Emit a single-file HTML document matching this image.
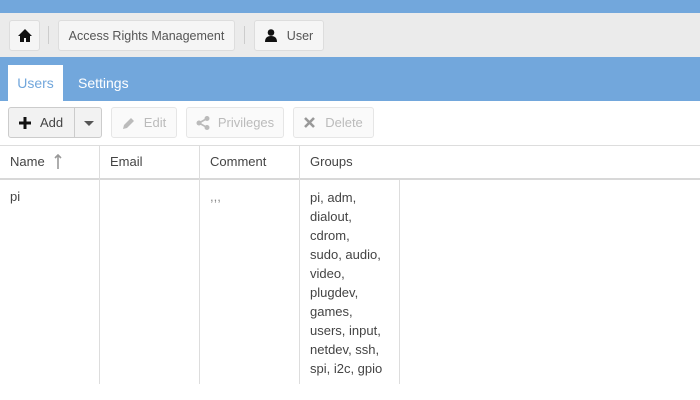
<!DOCTYPE html><html><head><style>
body{margin:0;width:700px;height:400px;overflow:hidden;font-family:"Liberation Sans",sans-serif;font-size:13px;color:#444;background:#fff;position:relative}
.a{position:absolute;box-sizing:border-box}
.btn{border:1px solid #ddd;border-radius:3px;background:#f5f5f5;display:flex;align-items:center;justify-content:center;height:31px}
.dis{color:#bbb;border-color:#e6e6e6;background:#fafafa}
.vl{position:absolute;width:1px;background:#ddd}
</style></head><body>
<div class="a" style="left:0;top:0;width:700px;height:13px;background:#72a7dc"></div>
<div class="a" style="left:0;top:13px;width:700px;height:44px;background:#ebebeb"></div>
<div class="a btn" style="left:9px;top:20px;width:31px;height:31px"><svg width="14" height="13" viewBox="0 0 14 13"><path d="M7 0L0 7h2v6h4V9h2v4h4V7h2z" fill="#111"/></svg></div>
<div class="a" style="left:48px;top:26px;width:1px;height:18px;background:#ccc"></div>
<div class="a btn" style="left:58px;top:20px;width:177px;color:#555;font-size:12.5px">Access Rights Management</div>
<div class="a" style="left:244px;top:26px;width:1px;height:18px;background:#ccc"></div>
<div class="a btn" style="left:254px;top:20px;width:70px;color:#555;font-size:12.5px"><svg width="12" height="13" viewBox="0 0 12 13" style="margin-right:10px"><circle cx="6" cy="3.5" r="3.3" fill="#111"/><path d="M0 13c0-4 2-6 6-6s6 2 6 6z" fill="#111"/></svg>User</div>
<div class="a" style="left:0;top:57px;width:700px;height:44px;background:#72a7dc"></div>
<div class="a" style="left:8px;top:65px;width:55px;height:36px;background:#fff;color:#72a7dc;display:flex;align-items:center;justify-content:center;font-size:14px">Users</div>
<div class="a" style="left:78px;top:65px;height:36px;color:#fff;display:flex;align-items:center;font-size:14px">Settings</div>
<div class="a btn" style="left:8px;top:107px;width:94px;justify-content:flex-start;background:#f2f2f2;border-color:#ccc">
<svg width="12" height="12" viewBox="0 0 12 12" style="margin-left:10px"><path d="M4.5 0h3v4.5H12v3H7.5V12h-3V7.5H0v-3h4.5z" fill="#111"/></svg><span style="margin-left:9px">Add</span>
<div style="position:absolute;left:65px;top:0;bottom:0;width:1px;background:#ccc"></div>
<svg width="10" height="6" viewBox="0 0 10 6" style="position:absolute;left:75px;top:13px"><path d="M0 0h10L5 5z" fill="#555"/></svg></div>
<div class="a btn dis" style="left:111px;top:107px;width:66px"><svg width="14" height="14" viewBox="0 0 14 14" style="margin-right:8px"><path d="M1 13l1-4 7-7 3 3-7 7z" fill="#bbb"/></svg>Edit</div>
<div class="a btn dis" style="left:186px;top:107px;width:98px"><svg width="14" height="14" viewBox="0 0 14 14" style="margin-right:8px"><circle cx="3" cy="7" r="2.5" fill="#bbb"/><circle cx="11" cy="2.5" r="2.5" fill="#bbb"/><circle cx="11" cy="11.5" r="2.5" fill="#bbb"/><path d="M3 7L11 2.5M3 7l8 4.5" stroke="#bbb" stroke-width="1.6"/></svg>Privileges</div>
<div class="a btn dis" style="left:293px;top:107px;width:81px"><svg width="11" height="11" viewBox="0 0 11 11" style="margin-right:10px"><path d="M1 1l9 9M10 1l-9 9" stroke="#999" stroke-width="2.6"/></svg>Delete</div>
<div class="a" style="left:0;top:145px;width:700px;height:1px;background:#ddd"></div>
<div class="a" style="left:0;top:178px;width:700px;height:2px;background:#d8d8d8"></div>
<div class="vl" style="left:99px;top:146px;height:238px"></div>
<div class="vl" style="left:199px;top:146px;height:238px"></div>
<div class="vl" style="left:299px;top:146px;height:238px"></div>
<div class="vl" style="left:399px;top:180px;height:204px"></div>
<div class="a" style="left:10px;top:154px">Name</div>
<svg class="a" style="left:54px;top:154px" width="8" height="15" viewBox="0 0 8 15"><path d="M4 1v14M1 4l3-3 3 3" stroke="#999" stroke-width="1.6" fill="none"/></svg>
<div class="a" style="left:110px;top:154px">Email</div>
<div class="a" style="left:210px;top:154px">Comment</div>
<div class="a" style="left:310px;top:154px">Groups</div>
<div class="a" style="left:10px;top:189px">pi</div>
<div class="a" style="left:210px;top:189px;color:#888">,,,</div>
<div class="a" style="left:310px;top:188px;line-height:19px;width:85px">pi, adm,<br>dialout,<br>cdrom,<br>sudo, audio,<br>video,<br>plugdev,<br>games,<br>users, input,<br>netdev, ssh,<br>spi, i2c, gpio</div>
</body></html>
